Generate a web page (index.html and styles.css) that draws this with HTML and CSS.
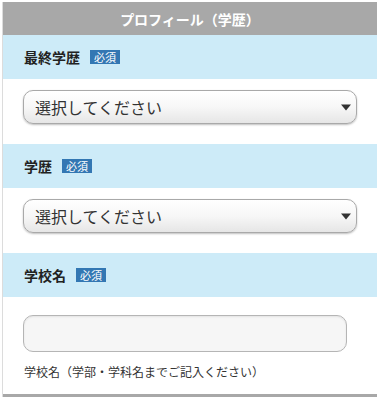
FILE: index.html
```html
<!DOCTYPE html>
<html lang="ja">
<head>
<meta charset="utf-8">
<link rel="stylesheet" href="styles.css">
</head>
<body>
<div class="panel">
  <div class="panel-title">プロフィール（学歴）</div>

  <div class="field-head"><span class="label">最終学歴</span><span class="badge">必須</span></div>
  <div class="field-body">
    <div class="select"><span>選択してください</span>
      <svg class="arrow" width="10" height="7" viewBox="0 0 10 7"><path d="M0 0.5 L10 0.5 L5 6.5 Z" fill="#333"/></svg>
    </div>
  </div>

  <div class="field-head"><span class="label">学歴</span><span class="badge">必須</span></div>
  <div class="field-body">
    <div class="select"><span>選択してください</span>
      <svg class="arrow" width="10" height="7" viewBox="0 0 10 7"><path d="M0 0.5 L10 0.5 L5 6.5 Z" fill="#333"/></svg>
    </div>
  </div>

  <div class="field-head"><span class="label">学校名</span><span class="badge">必須</span></div>
  <div class="field-body text-body">
    <div class="input"></div>
    <p class="hint">学校名（学部・学科名までご記入ください）</p>
  </div>
  <div class="panel-foot"></div>
</div>
</body>
</html>
```

FILE: styles.css
```css
html, body {
  margin: 0;
  padding: 0;
  background: #ffffff;
}
body {
  padding-top: 2px;
  font-family: "Noto Sans CJK JP", "Noto Sans", sans-serif;
  color: #222;
}
.panel {
  margin-left: 2px;
  border-left: 1px solid #dcdcdc;
}
.panel-title {
  height: 33px;
  background: #a8a8a8;
  color: #fff;
  font-weight: bold;
  font-size: 14px;
  display: flex;
  align-items: center;
  justify-content: center;
}
.field-head {
  height: 44px;
  background: #cdebf8;
  display: flex;
  align-items: center;
  padding-left: 21px;
}
.label {
  font-size: 14px;
  font-weight: bold;
  color: #222;
}
.badge {
  margin-left: 10px;
  background: #3377b3;
  color: #fff;
  font-size: 11px;
  line-height: 14px;
  height: 14px;
  padding: 0 4px;
}
.field-body {
  padding: 11px 20px 20px 20px;
}
.select {
  box-sizing: border-box;
  height: 34px;
  border: 1px solid #a9a9a9;
  border-radius: 10px;
  background: linear-gradient(#ffffff, #f7f7f7 50%, #e6e6e6);
  box-shadow: 0 1px 2px rgba(0,0,0,0.25);
  display: flex;
  align-items: center;
  justify-content: space-between;
  padding: 0 5px 0 11px;
  font-size: 16px;
  color: #333;
}
.arrow {
  display: block;
}
.text-body {
  padding: 18px 30px 0 20px;
}
.input {
  box-sizing: border-box;
  height: 37px;
  border: 1px solid #b5b5b5;
  border-radius: 10px;
  background: #f6f6f6;
  box-shadow: inset 0 1px 2px rgba(0,0,0,0.08);
}
.hint {
  margin: 0;
  padding: 11px 0 13px 1px;
  font-size: 12px;
  line-height: 18px;
  color: #333;
}
.panel-foot {
  height: 6px;
  background: #a8a8a8;
}
```
